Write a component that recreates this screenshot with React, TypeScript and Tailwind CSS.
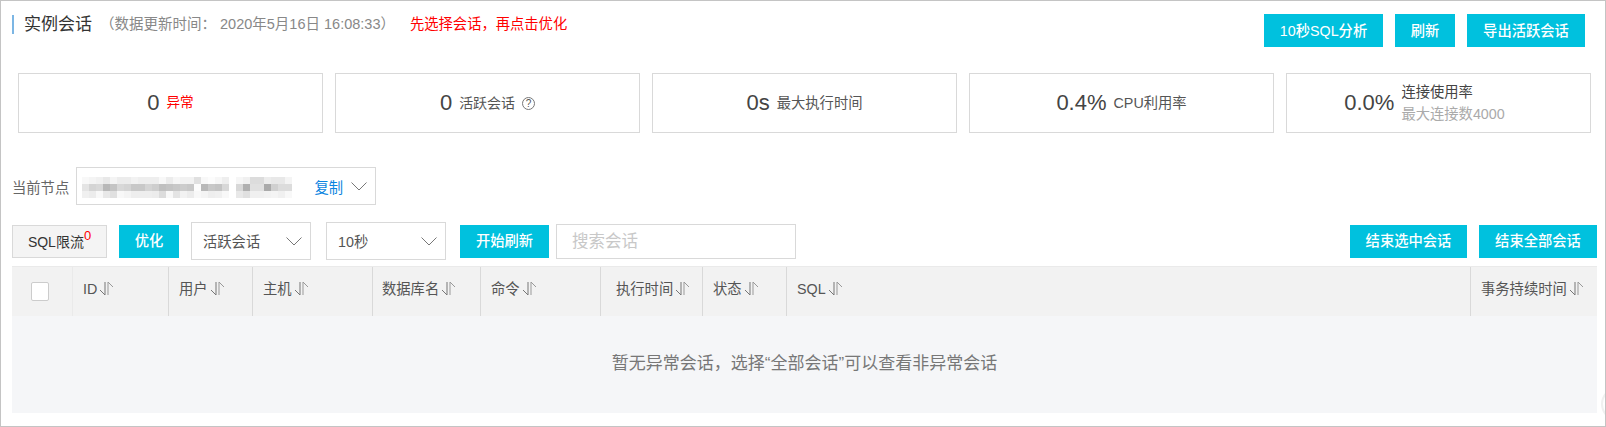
const font = "font-['Liberation_Sans','Noto_Sans_CJK_SC',sans-serif]";

function SortIcon() {
  return (
    <svg width="15" height="15" viewBox="0 0 15 15" fill="none" className="ml-0.5 -mt-1 shrink-0">
      <path d="M1 9L6 14V1" stroke="#777" strokeWidth="1" />
      <path d="M9 14V1L14 6" stroke="#999" strokeWidth="1" />
    </svg>
  );
}

function Chevron() {
  return (
    <svg width="16" height="9" viewBox="0 0 16 9" fill="none" className="shrink-0">
      <path d="M0.5 0.5L8 8L15.5 0.5" stroke="#777" strokeWidth="1" />
    </svg>
  );
}

function Btn({ children, className = "" }: { children: React.ReactNode; className?: string }) {
  return (
    <button className={`h-[33px] pt-[2px] bg-[#00c1de] text-white text-[14.3px] font-medium flex items-center justify-center ${className}`}>
      {children}
    </button>
  );
}

function Stat({ value, children }: { value: string; children: React.ReactNode }) {
  return (
    <div className="h-[60px] border border-[#d9d9d9] flex items-center justify-center gap-[7px]">
      <span className="text-[22px] text-[#444] pb-px">{value}</span>
      {children}
    </div>
  );
}

function Dropdown({ label, className = "" }: { label: string; className?: string }) {
  return (
    <div className={`h-[38px] border border-[#d9d9d9] bg-white flex items-center justify-between pl-[11px] pr-2 text-[14.3px] text-[#555] ${className}`}>
      <span className="pt-[3px]">{label}</span>
      <Chevron />
    </div>
  );
}

const columns = [
  { label: "ID", width: "w-[96px]", pad: "pl-[10px]" },
  { label: "用户", width: "w-[84px]", pad: "pl-[10px]" },
  { label: "主机", width: "w-[120px]", pad: "pl-[10px]" },
  { label: "数据库名", width: "w-[108px]", pad: "pl-[9px]" },
  { label: "命令", width: "w-[120px]", pad: "pl-[10px]" },
  { label: "执行时间", width: "w-[102px]", pad: "pl-[15px]" },
  { label: "状态", width: "w-[84px]", pad: "pl-[10px]" },
  { label: "SQL", width: "flex-1", pad: "pl-[10px]" },
  { label: "事务持续时间", width: "w-[126px]", pad: "pl-[10px]" },
];

// blurred node address
const blurRows = [
  "f8f8f8 f4f4f4 f0f0f0 e8e8e8 f4f4f4 ececec ececec f2f2f2 eeeeee eeeeee eeeeee f8f8f8 ececec f6f6f6 f2f2f2 f2f2f2 e0e0e0 f8f8f8 fcfcfc f6f6f6 eeeeee f6f6f6 f0f0f0 dcdcdc dcdcdc ececec e8e8e8 e8e8e8 f4f4f4",
  "e4e4e4 d4d4d4 d8d8d8 b8b8b8 c4c4c4 d8d8d8 d4d4d4 c8c8c8 c8c8c8 d4d4d4 cecece c0c0c0 c4c4c4 c8c8c8 cccccc c8c8c8 fcfcfc b8b8b8 c8c8c8 c4c4c4 d8d8d8 d8d8d8 b0b0b0 e0e0e0 e0e0e0 aaaaaa d0d0d0 dcdcdc dcdcdc",
  "f0f0f0 ececec f8f8f8 e8e8e8 e0e0e0 f8f8f8 f4f4f4 eeeeee eeeeee eeeeee ececec dcdcdc f8f8f8 e4e4e4 f2f2f2 ececec f8f8f8 f4f4f4 eeeeee f0f0f0 f8f8f8 e8e8e8 e0e0e0 f0f0f0 f0f0f0 f2f2f2 f4f4f4 f0f0f0 f8f8f8",
];

export default function App() {
  return (
    <div className={`w-[1606px] h-[427px] relative overflow-hidden bg-white border border-[#c4c4c4] pt-[13px] pl-[11px] pr-2 ${font}`}>
      {/* Title */}
      <div className="flex justify-between items-start pr-[12px]">
        <div className="flex items-center h-[19px] mt-px border-l-2 border-[#7cb6e4] pl-[10px]">
          <span className="text-[17px] text-[#333] pt-px">实例会话</span>
          <span className="text-[14.5px] text-[#888] ml-[8px]">（数据更新时间： 2020年5月16日 16:08:33）</span>
          <span className="text-[14.3px] text-[#f00] ml-[15px]">先选择会话，再点击优化</span>
        </div>
        <div className="flex gap-3">
          <Btn className="w-[119px]">10秒SQL分析</Btn>
          <Btn className="w-[60px]">刷新</Btn>
          <Btn className="w-[118px]">导出活跃会话</Btn>
        </div>
      </div>

      {/* Stats */}
      <div className="grid grid-cols-5 gap-3 mt-[26px] ml-[6px] mr-[6px]">
        <Stat value="0">
          <span className="text-[13.6px] text-[#f00] pt-px">异常</span>
        </Stat>
        <Stat value="0">
          <span className="text-[14px] text-[#555] flex items-center gap-[7px] pt-px">
            活跃会话
            <span className="w-[13px] h-[13px] rounded-full border border-[#777] text-[10px] leading-none flex items-center justify-center">?</span>
          </span>
        </Stat>
        <Stat value="0s">
          <span className="text-[14.3px] text-[#555] pt-px">最大执行时间</span>
        </Stat>
        <Stat value="0.4%">
          <span className="text-[14.3px] text-[#555] pt-px">CPU利用率</span>
        </Stat>
        <Stat value="0.0%">
          <span className="text-[14.3px] leading-[22px] pr-[28px]">
            <span className="block text-[#444]">连接使用率</span>
            <span className="block text-[#aaa]">最大连接数4000</span>
          </span>
        </Stat>
      </div>

      {/* Node */}
      <div className="flex items-center mt-[34px]">
        <span className="w-[64px] text-[14.3px] text-[#666] pt-[6px]">当前节点</span>
        <div className="w-[300px] h-[38px] border border-[#d9d9d9] flex items-center pl-[5px] pr-2">
          <div className="w-[211px] shrink-0 flex flex-col mt-[3px]">
            {blurRows.map((row, i) => (
              <div key={i} className="flex h-[7px]">
                {row.split(" ").map((c, j) => (
                  <span key={j} className={`w-[7px] ${j === 20 ? "mr-[7px]" : ""}`} style={{ backgroundColor: `#${c}` }} />
                ))}
              </div>
            ))}
          </div>
          <span className="text-[14.3px] text-[#0a84e0] ml-auto mr-2 pt-[5px]">复制</span>
          <Chevron />
        </div>
      </div>

      {/* Toolbar */}
      <div className="flex items-center justify-between mt-[17px]">
        <div className="flex items-center">
          <div className="w-[95px] h-[33px] pt-[2px] border border-[#d9d9d9] bg-[#f4f4f4] flex items-center justify-center text-[14px] text-[#333]">
            SQL限流<sup className="text-[13px] text-[#f00]">0</sup>
          </div>
          <Btn className="w-[60px] ml-3">优化</Btn>
          <Dropdown label="活跃会话" className="w-[120px] ml-3" />
          <Dropdown label="10秒" className="w-[120px] ml-[15px]" />
          <Btn className="w-[89px] ml-[14px]">开始刷新</Btn>
          <div className="w-[240px] h-[35px] ml-[7px] pt-px border border-[#d9d9d9] flex items-center pl-[15px] text-[16.5px] text-[#c8c8c8]">搜索会话</div>
        </div>
        <div className="flex gap-3">
          <Btn className="w-[117px]">结束选中会话</Btn>
          <Btn className="w-[118px]">结束全部会话</Btn>
        </div>
      </div>

      {/* Table */}
      <div className="mt-[6px] h-[147px] w-[1585px] bg-[#f5f6f8]">
        <div className="h-[50px] flex bg-[#f2f2f2] border-t border-[#eaeaea] text-[14.3px] text-[#555]">
          <div className="w-[61px] shrink-0 flex items-center pl-[19px] border-r border-[#eaeaea]">
            <span className="w-[18px] h-[19px] bg-white border border-[#ccc] rounded-[2px]" />
          </div>
          {columns.map((c, i) => (
            <div key={c.label} className={`${c.width} shrink-0 flex items-center pb-[3px] ${c.pad} ${i < columns.length - 1 ? "border-r border-[#d9d9d9]" : ""}`}>
              {c.label}
              <SortIcon />
            </div>
          ))}
        </div>
        <div className="h-[97px] flex items-center justify-center pb-[2px] text-[17px] text-[#777]">
          暂无异常会话，选择“全部会话”可以查看非异常会话
        </div>
      </div>

      {/* floating helper, mostly off the edge */}
      <div className="absolute top-[386px] right-[-30px] w-[34px] h-[34px] rounded-full bg-white border-2 border-[#f0f0f0]" />
    </div>
  );
}
